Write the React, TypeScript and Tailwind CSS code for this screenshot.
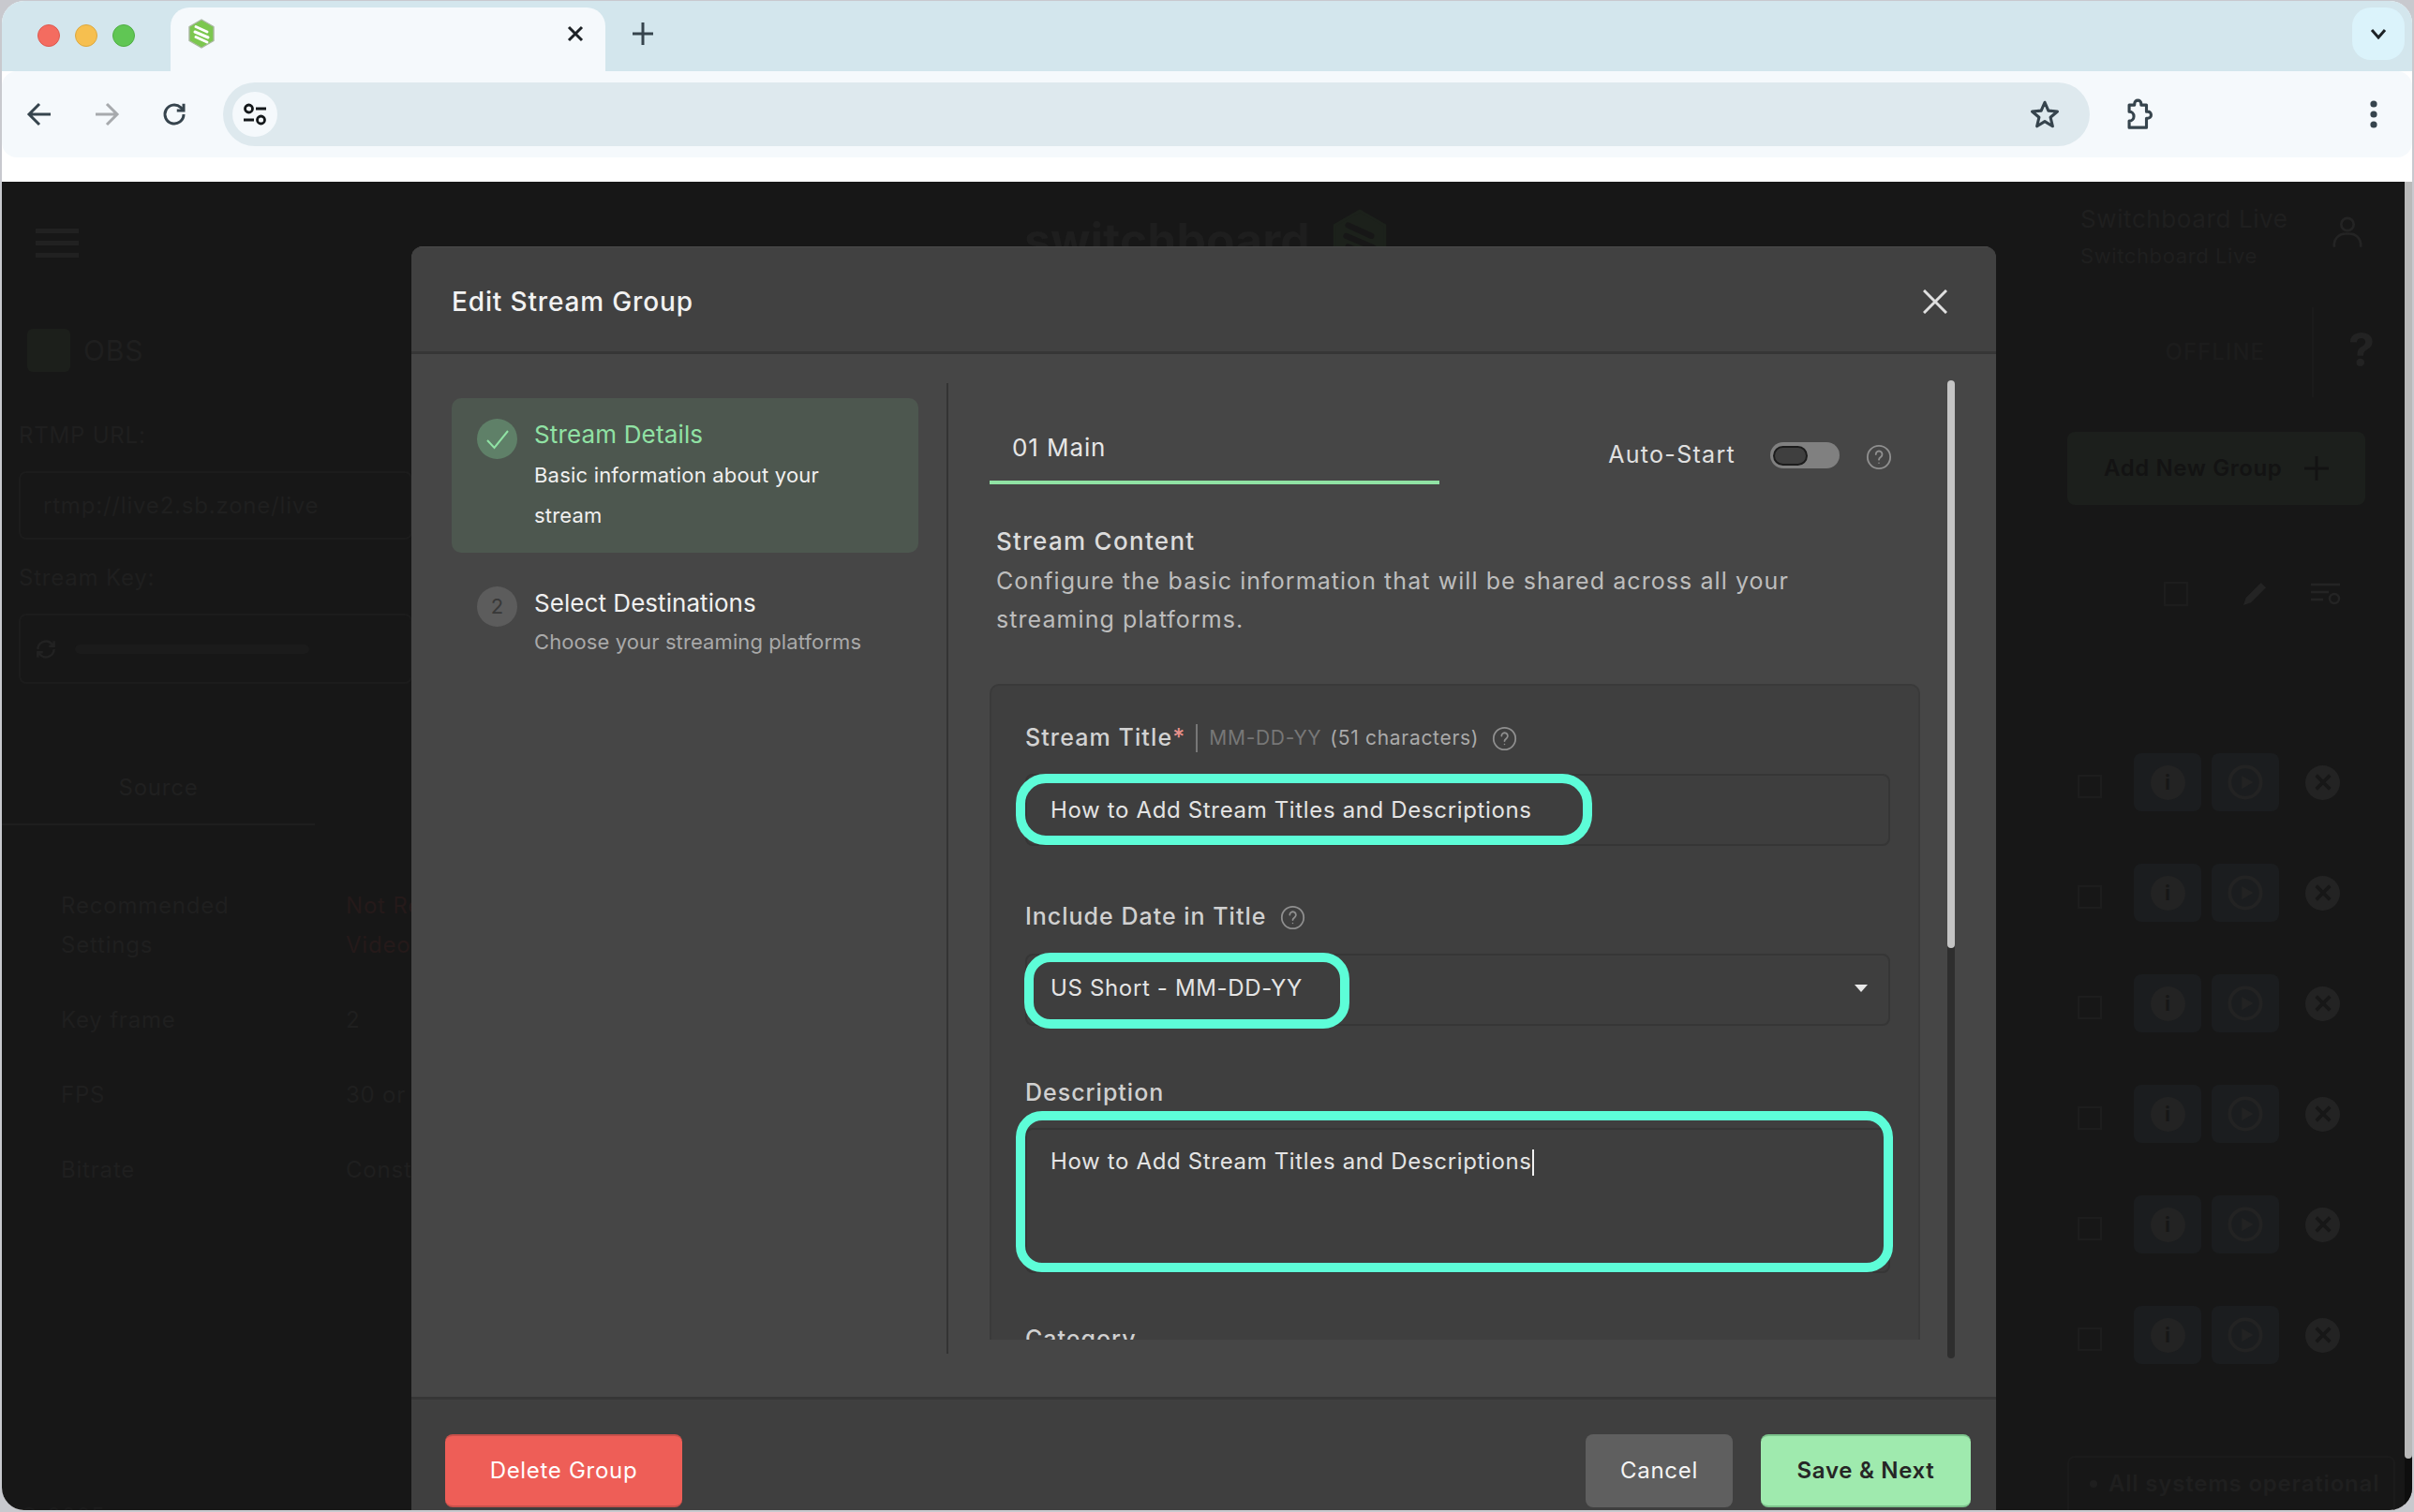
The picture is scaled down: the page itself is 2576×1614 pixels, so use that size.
import React from "react";

const HelpIcon = ({ c = "#8f8f8f", s = 27 }: { c?: string; s?: number }) => (
  <svg width={s} height={s} viewBox="0 0 24 24" fill="none" stroke={c} strokeWidth="1.6">
    <circle cx="12" cy="12" r="10.4" />
    <path d="M9.2 9.4a2.9 2.9 0 1 1 4.6 2.3c-1 .7-1.8 1.3-1.8 2.6" strokeLinecap="round" />
    <circle cx="12" cy="17.4" r="0.7" fill={c} stroke="none" />
  </svg>
);

const Favicon = ({ fill, stripe, edge, w, h }: { fill: string; stripe: string; edge: string; w: number; h: number }) => (
  <svg width={w} height={h} viewBox="0 0 28 32">
    <path d="M14 1 L27 8.5 V23.5 L14 31 L1 23.5 V8.5 Z" fill={fill} stroke={edge} strokeWidth="1.4" strokeLinejoin="round" />
    <path d="M8 8.5 L20 14 M7 14 L21 20 M8 19.5 L20 25" stroke={stripe} strokeWidth="3" strokeLinecap="round" fill="none" />
  </svg>
);

const Row = () => (
  <div className="flex items-center h-[62px] mb-[56px] pl-[11px]">
    <div className="w-[26px] h-[25px] border-[2px] border-[#1d1d1d] mt-[8px]" />
    <div className="w-[72px] h-[62px] ml-[34px] rounded-lg bg-[#1b1d1f] flex items-center justify-center">
      <div className="w-[37px] h-[37px] rounded-full bg-[#232323] flex items-center justify-center text-[#171717] text-[22px] font-bold leading-none">i</div>
    </div>
    <div className="w-[72px] h-[62px] ml-[11px] rounded-lg bg-[#1b1d1f] flex items-center justify-center">
      <svg width="38" height="38" viewBox="0 0 24 24" fill="none">
        <circle cx="12" cy="12" r="10.5" stroke="#232323" strokeWidth="2.4" />
        <path d="M9.5 7.5 L17.5 12 L9.5 16.5 Z" fill="#232323" />
      </svg>
    </div>
    <div className="w-[37px] h-[37px] ml-[28px] rounded-full bg-[#232323] flex items-center justify-center">
      <svg width="22" height="22" viewBox="0 0 24 24" stroke="#171717" strokeWidth="4">
        <path d="M4 4 L20 20 M20 4 L4 20" />
      </svg>
    </div>
  </div>
);

export default function App() {
  return (
    <div className="w-[2576px] h-[1614px] overflow-hidden bg-[#c8c9ce] font-['Inter',sans-serif] pt-[1px]">
      <div className="w-[2572px] ml-[2px] h-[1611px] rounded-[24px] overflow-hidden flex flex-col bg-white">
        {/* tab strip */}
        <div className="h-[75px] bg-[#d3e6ed] flex items-start pt-[7px] shrink-0">
          <div className="flex gap-[16px] pl-[38px] pt-[18px] w-[180px]">
            <div className="w-[24px] h-[24px] rounded-full bg-[#f46c60] border border-[#dd5a50]" />
            <div className="w-[24px] h-[24px] rounded-full bg-[#f6bf4f] border border-[#dca83f]" />
            <div className="w-[24px] h-[24px] rounded-full bg-[#60c654] border border-[#4fae44]" />
          </div>
          <div className="w-[464px] h-[68px] bg-[#f5f9fc] rounded-t-[20px] flex items-center pl-[18px] pr-[22px] pb-[12px] justify-between">
            <Favicon fill="#7cc74f" stripe="#ffffff" edge="#a9b8a0" w={30} h={32} />
            <svg width="20" height="20" viewBox="0 0 20 20" stroke="#1d2226" strokeWidth="3"><path d="M3 3 L17 17 M17 3 L3 17" /></svg>
          </div>
          <svg className="ml-[28px] mt-[15px]" width="24" height="26" viewBox="0 0 24 26" stroke="#36444d" strokeWidth="3"><path d="M12 1 V25 M1 13 H23" /></svg>
          <div className="ml-auto mr-[8px] mt-0 w-[56px] h-[56px] rounded-[20px] bg-[#dbf3fb] flex items-center justify-center">
            <svg width="20" height="14" viewBox="0 0 20 14" fill="none" stroke="#1d2226" strokeWidth="3"><path d="M3 3 L10 11 L17 3" /></svg>
          </div>
        </div>
        {/* toolbar */}
        <div className="h-[92px] bg-[#f5f9fc] rounded-[16px] flex items-center pl-[26px] shrink-0">
          <svg width="28" height="28" viewBox="0 0 28 28" fill="none" stroke="#36444d" strokeWidth="3"><path d="M26 14 H4 M14 3 L3 14 L14 25" /></svg>
          <svg className="ml-[44px]" width="28" height="28" viewBox="0 0 28 28" fill="none" stroke="#a7aaad" strokeWidth="3"><path d="M2 14 H24 M14 3 L25 14 L14 25" /></svg>
          <svg className="ml-[43px]" width="30" height="30" viewBox="0 0 24 24" fill="none" stroke="#36444d" strokeWidth="2.4"><path d="M20 12a8 8 0 1 1-2.6-5.9L20 8.5" /><path d="M20 3 V8.8 H14.2" /></svg>
          <div className="ml-[37px] w-[1992px] h-[68px] bg-[#dee9ee] rounded-full flex items-center pl-[10px]">
            <div className="w-[48px] h-[48px] rounded-full bg-[#f5f9fc] flex items-center justify-center">
              <svg width="26" height="26" viewBox="0 0 26 26" fill="none" stroke="#14181b" strokeWidth="2.8">
                <circle cx="6.5" cy="7" r="4" />
                <path d="M14 7 H25 M1 19 H12" />
                <circle cx="19.5" cy="19" r="4" />
              </svg>
            </div>
            <svg className="ml-auto mr-[31px]" width="34" height="34" viewBox="0 0 24 24" fill="none" stroke="#36444d" strokeWidth="2.2"><path d="M12 3 L14.7 9.3 L21.5 9.9 L16.3 14.3 L17.9 21 L12 17.4 L6.1 21 L7.7 14.3 L2.5 9.9 L9.3 9.3 Z" strokeLinejoin="round" /></svg>
          </div>
          <svg className="ml-[35px]" width="34" height="34" viewBox="0 0 24 24" fill="none" stroke="#36444d" strokeWidth="2.2" strokeLinejoin="round"><path d="M5 5 H9 V4 a2.5 2.5 0 0 1 5 0 V5 H18 V10 H19 a2.5 2.5 0 0 1 0 5 H18 V22 H5 V17 a3.5 3.5 0 0 0 0-7 Z" /></svg>
          <svg className="ml-[230px]" width="8" height="32" viewBox="0 0 8 32" fill="#36444d"><circle cx="4" cy="5" r="3.6" /><circle cx="4" cy="16" r="3.6" /><circle cx="4" cy="27" r="3.6" /></svg>
        </div>
        <div className="h-[26px] bg-white shrink-0" />
        {/* page */}
        <div className="relative flex-1 min-h-0 flex bg-[#171717] overflow-hidden">
          {/* left column behind modal */}
          <div className="w-[438px] shrink-0 overflow-hidden text-[#1f1f1f] text-[24px] tracking-[0.8px] whitespace-nowrap">
            <div className="ml-[36px] mt-[50px] flex flex-col gap-[8px] w-[46px]">
              <div className="h-[5px] bg-[#212121]" />
              <div className="h-[5px] bg-[#212121]" />
              <div className="h-[5px] bg-[#212121]" />
            </div>
            <div className="flex items-center mt-[76px] ml-[27px]">
              <div className="w-[46px] h-[46px] rounded-md bg-[#1c1f1b]" />
              <span className="ml-[14px] text-[30px]">OBS</span>
            </div>
            <div className="ml-[18px] mt-[50px] leading-[36px]">RTMP URL:</div>
            <div className="ml-[18px] mt-[20px] h-[73px] border-2 border-[#1c1c1c] rounded-lg pl-[24px] flex items-center">rtmp://live2.sb.zone/live</div>
            <div className="ml-[18px] mt-[23px] leading-[36px]">Stream Key:</div>
            <div className="ml-[18px] mt-[20px] h-[75px] border-2 border-[#1c1c1c] rounded-lg pl-[14px] flex items-center">
              <svg width="26" height="30" viewBox="0 0 24 24" fill="none" stroke="#222" strokeWidth="2.2"><path d="M4 12a8 8 0 0 1 14-5l2 2M20 12a8 8 0 0 1-14 5l-2-2M20 4v5h-5M4 20v-5h5" /></svg>
              <div className="ml-[18px] w-[250px] h-[10px] bg-[#1b1b1b] rounded-full" />
            </div>
            <div className="mt-[75px] h-[76px] w-[334px] border-b-2 border-[#1e1e1e] flex items-center justify-center pb-[2px] text-[#202020]">Source</div>
            <div className="grid grid-cols-[304px_1fr] ml-[63px] mt-[65px] leading-[42px]">
              <div>Recommended<br />Settings</div>
              <div className="text-[#251a1a]">Not Recommended<br />Video</div>
              <div className="mt-[38px]">Key frame</div>
              <div className="mt-[38px]">2</div>
              <div className="mt-[38px]">FPS</div>
              <div className="mt-[38px]">30 or 60</div>
              <div className="mt-[38px]">Bitrate</div>
              <div className="mt-[38px]">Constant</div>
            </div>
            <div className="ml-[18px] mt-[331px] text-[#1c1c1c]">© 2025</div>
          </div>
          {/* center behind modal */}
          <div className="w-[1690px] shrink-0 pl-[653px] pt-[23px] flex items-start gap-[24px] overflow-hidden">
            <span className="text-[50px] font-bold text-[#1e1e1e] leading-[72px] mt-[3px]">switchboard</span>
            <div className="mt-[6px]"><Favicon fill="#1c211b" stripe="#171717" edge="#1c211b" w={58} h={66} /></div>
          </div>
          {/* right column behind modal */}
          <div className="w-[436px] shrink-0 whitespace-nowrap text-[#1f1f1f]">
            <div className="flex pl-[90px] pt-[24px]">
              <div>
                <div className="text-[26px] leading-[32px] tracking-[0.6px]">Switchboard Live</div>
                <div className="text-[22px] leading-[32px] mt-[7px] tracking-[0.6px]">Switchboard Live</div>
              </div>
              <svg className="ml-[43px] mt-[9px]" width="40" height="40" viewBox="0 0 24 24" fill="none" stroke="#242424" strokeWidth="1.6"><circle cx="12" cy="7.5" r="4" /><path d="M3.5 22 v-2 a7 7 0 0 1 7-6.5 h3 a7 7 0 0 1 7 6.5 v2" /></svg>
            </div>
            <div className="flex items-center mt-[39px] h-[96px]">
              <div className="w-[337px] text-right pr-[50px] text-[24px] font-medium text-[#1c1c1c] tracking-[1px]">OFFLINE</div>
              <div className="w-[2px] h-[96px] bg-[#1b1b1b]" />
              <span className="ml-[37px] -mt-[6px] text-[50px] font-bold text-[#232323] leading-none">?</span>
            </div>
            <div className="ml-[76px] mt-[37px] w-[318px] h-[78px] rounded-lg bg-[#1c1f1c] flex items-center pl-[39px] text-[#131313] font-semibold text-[24px] tracking-[0.6px]">
              Add New Group
              <svg className="ml-[23px]" width="28" height="28" viewBox="0 0 28 28" stroke="#131313" strokeWidth="3"><path d="M14 1 V27 M1 14 H27" /></svg>
            </div>
            <div className="flex items-center h-[60px] mt-[65px]">
              <div className="ml-[179px] w-[26px] h-[26px] border-[2px] border-[#1d1d1d]" />
              <svg className="ml-[55px]" width="32" height="32" viewBox="0 0 24 24" fill="#242424"><path d="M3 21 L5 15 L17 3 L21 7 L9 19 Z" /></svg>
              <svg className="ml-[43px]" width="34" height="28" viewBox="0 0 34 28" fill="none" stroke="#242424" strokeWidth="2.5"><path d="M1 4 H32 M1 12 H20 M1 20 H14" /><circle cx="26" cy="19" r="5" /></svg>
            </div>
            <div className="ml-[76px] mt-[140px]">
              {[0, 1, 2, 3, 4, 5].map((i) => (
                <Row key={i} />
              ))}
            </div>
            <div className="ml-[76px] mt-[98px] h-[60px] w-[350px] border-2 border-[#1b1b1b] rounded-t-lg flex items-center pl-[22px] text-[24px] tracking-[0.8px] font-semibold text-[#1f1f1f]">
              <div className="w-[8px] h-[8px] rounded-full bg-[#1f1f1f] mr-[12px]" />
              All systems operational
            </div>
          </div>
          <div className="w-[8px] shrink-0 bg-[#0e0e0e]">
            <div className="h-[1363px] bg-[#b9b9b9] rounded-b-full" />
          </div>

          {/* modal */}
          <div className="absolute left-[437px] top-[69px] bottom-0 w-[1691px] flex flex-col rounded-t-[12px] overflow-hidden bg-[#464646]">
            <div className="h-[115px] shrink-0 bg-[#414141] border-t border-[#4b4b4b] border-b-[3px] border-b-[#363636] flex items-center justify-between pl-[43px] pr-[52px] pt-[4px]">
              <span className="text-[28px] font-medium text-[#f2f2f2] tracking-[0.85px]">Edit Stream Group</span>
              <svg width="26" height="26" viewBox="0 0 26 26" stroke="#e0e0e0" strokeWidth="3"><path d="M1 1 L25 25 M25 1 L1 25" /></svg>
            </div>
            <div className="flex-1 min-h-0 flex items-start">
              {/* steps */}
              <div className="w-[498px] ml-[43px] mt-[47px] shrink-0">
                <div className="h-[165px] rounded-[10px] bg-[#4d574f] flex pl-[27px] pt-[22px]">
                  <div className="w-[43px] h-[43px] rounded-full bg-[#5f8068] flex items-center justify-center">
                    <svg width="26" height="22" viewBox="0 0 26 22" fill="none" stroke="#90e2a4" strokeWidth="2"><path d="M2 12 L9.5 20 L24 2" /></svg>
                  </div>
                  <div className="ml-[18px] -mt-[1px]">
                    <div className="text-[26px] leading-[36px] text-[#90e2a4] tracking-[0.15px]">Stream Details</div>
                    <div className="text-[22px] leading-[43px] text-[#f0f0f0] tracking-[0.2px] w-[340px] mt-[4px]">Basic information about your stream</div>
                  </div>
                </div>
                <div className="flex pl-[27px] mt-[36px]">
                  <div className="w-[43px] h-[43px] rounded-full bg-[#5c5c5c] flex items-center justify-center text-[22px] text-[#383838]">2</div>
                  <div className="ml-[18px]">
                    <div className="text-[26px] leading-[36px] text-[#f0f0f0] tracking-[0.05px]">Select Destinations</div>
                    <div className="text-[22px] leading-[44px] text-[#a9a9a9] tracking-[0.1px] mt-[1px]">Choose your streaming platforms</div>
                  </div>
                </div>
              </div>
              <div className="w-[2px] h-[1036px] bg-[#333333] mt-[31px] ml-[30px] shrink-0" />
              {/* form */}
              <div className="w-[993px] h-[1052px] ml-[44px] shrink-0 overflow-hidden">
                <div className="flex mt-[73px] items-start">
                  <div className="w-[480px] h-[66px] border-b-[4px] border-[#90e2a4] pl-[24px] pt-[9px] text-[26px] leading-[36px] text-[#e6e6e6] tracking-[0.9px]">01 Main</div>
                  <div className="ml-auto flex items-center h-[66px] pr-[30px] pt-[4px]">
                    <span className="text-[25px] tracking-[1.3px] text-[#e0e0e0] -mt-[1px]">Auto-Start</span>
                    <div className="ml-[37px] w-[74px] h-[28px] rounded-full bg-[#808080] pl-[3px] flex items-center">
                      <div className="w-[37px] h-[21px] rounded-full bg-[#3f3f3f] border-[2px] border-[#1c1c1c]" />
                    </div>
                    <div className="ml-[28px] mt-[3px] flex"><HelpIcon s={28} /></div>
                  </div>
                </div>
                <div className="pl-[7px] mt-[44px]">
                  <div className="text-[26px] leading-[34px] font-medium text-[#dcdcdc] tracking-[1.3px]">Stream Content</div>
                  <p className="text-[25px] leading-[41px] text-[#bdbdbd] tracking-[1.07px] mt-[5px] w-[900px]">Configure the basic information that will be shared across all your streaming platforms.</p>
                </div>
                <div className="mt-[48px] bg-[#3f3f3f] border-2 border-[#3a3a3a] rounded-t-[10px] h-[760px] pt-[38px] pl-[36px] pr-[30px]">
                  <div className="flex items-center h-[36px]">
                    <span className="text-[25px] font-medium text-[#d2d2d2] tracking-[1.1px]">Stream Title<span className="text-[#e8918b]">*</span></span>
                    <div className="w-[2px] h-[30px] bg-[#777777] ml-[11px]" />
                    <span className="ml-[12px] text-[21px] text-[#777777] tracking-[0.7px]">MM-DD-YY</span>
                    <span className="ml-[9px] text-[21px] text-[#aaaaaa] tracking-[0.7px]">(51 characters)</span>
                    <div className="ml-[14px] flex"><HelpIcon s={27} /></div>
                  </div>
                  <div className="relative mt-[20px] h-[77px] rounded-lg bg-[#3e3e3e] border-2 border-[#363636] flex items-center pl-[25px] pt-[1px] text-[24px] text-[#e4e4e4] tracking-[0.65px]">
                    How to Add Stream Titles and Descriptions
                    <div className="absolute -left-[12px] -top-[2px] w-[615px] h-[76px] border-[10px] border-[#5dfdd8] rounded-[32px]" />
                  </div>
                  <div className="flex items-center h-[36px] mt-[58px]">
                    <span className="text-[25px] font-medium text-[#d0d0d0] tracking-[1px]">Include Date in Title</span>
                    <div className="ml-[15px] flex"><HelpIcon s={27} /></div>
                  </div>
                  <div className="relative mt-[21px] h-[77px] rounded-lg bg-[#3e3e3e] border-2 border-[#363636] flex items-center justify-between pl-[25px] pr-[22px] pb-[3px] text-[24px] text-[#e4e4e4] tracking-[0.65px]">
                    US Short - MM-DD-YY
                    <svg width="14" height="8" viewBox="0 0 14 8" fill="#e8e8e8"><path d="M0 0 H14 L7 8 Z" /></svg>
                    <div className="absolute -left-[3px] -top-[3px] w-[347px] h-[81px] border-[10px] border-[#5dfdd8] rounded-[28px]" />
                  </div>
                  <div className="text-[25px] leading-[36px] font-medium text-[#d0d0d0] tracking-[1px] mt-[53px]">Description</div>
                  <div className="relative mt-[20px] h-[155px] rounded-lg bg-[#3e3e3e] border-2 border-[#363636] pl-[25px] pt-[16px] text-[24px] leading-[36px] text-[#e4e4e4] tracking-[0.65px]">
                    <span>How to Add Stream Titles and Descriptions</span>
                    <span className="inline-block w-[2px] h-[28px] bg-[#f0f0f0] align-middle" />
                    <div className="absolute -left-[12px] -top-[20px] w-[936px] h-[172px] border-[10px] border-[#5dfdd8] rounded-[28px]" />
                  </div>
                  <div className="text-[25px] leading-[36px] font-medium text-[#d0d0d0] tracking-[1px] mt-[52px]">Category</div>
                </div>
              </div>
              {/* scrollbar */}
              <div className="w-[8px] h-[1044px] ml-[29px] mt-[28px] bg-[#2e2e2e] rounded-full shrink-0">
                <div className="h-[606px] bg-[#c4c4c4] rounded-full" />
              </div>
            </div>
            <div className="h-[121px] shrink-0 bg-[#3f3f3f] border-t-[3px] border-[#363636] flex items-start pl-[36px] pr-[27px] pt-[37px] text-[24px] tracking-[0.7px]">
              <button className="w-[253px] h-[78px] rounded-lg bg-[#ee5e57] border-t-2 border-b-2 border-[#c9504a] text-white">Delete Group</button>
              <button className="ml-auto w-[157px] h-[78px] rounded-lg bg-[#5f5f5f] text-[#f5f5f5]">Cancel</button>
              <button className="ml-[30px] w-[224px] h-[78px] rounded-lg bg-[#9feaae] border-t-2 border-b-2 border-[#7cc48c] text-[#262626] font-semibold">Save &amp; Next</button>
            </div>
          </div>
        </div>
      </div>
    </div>
  );
}
